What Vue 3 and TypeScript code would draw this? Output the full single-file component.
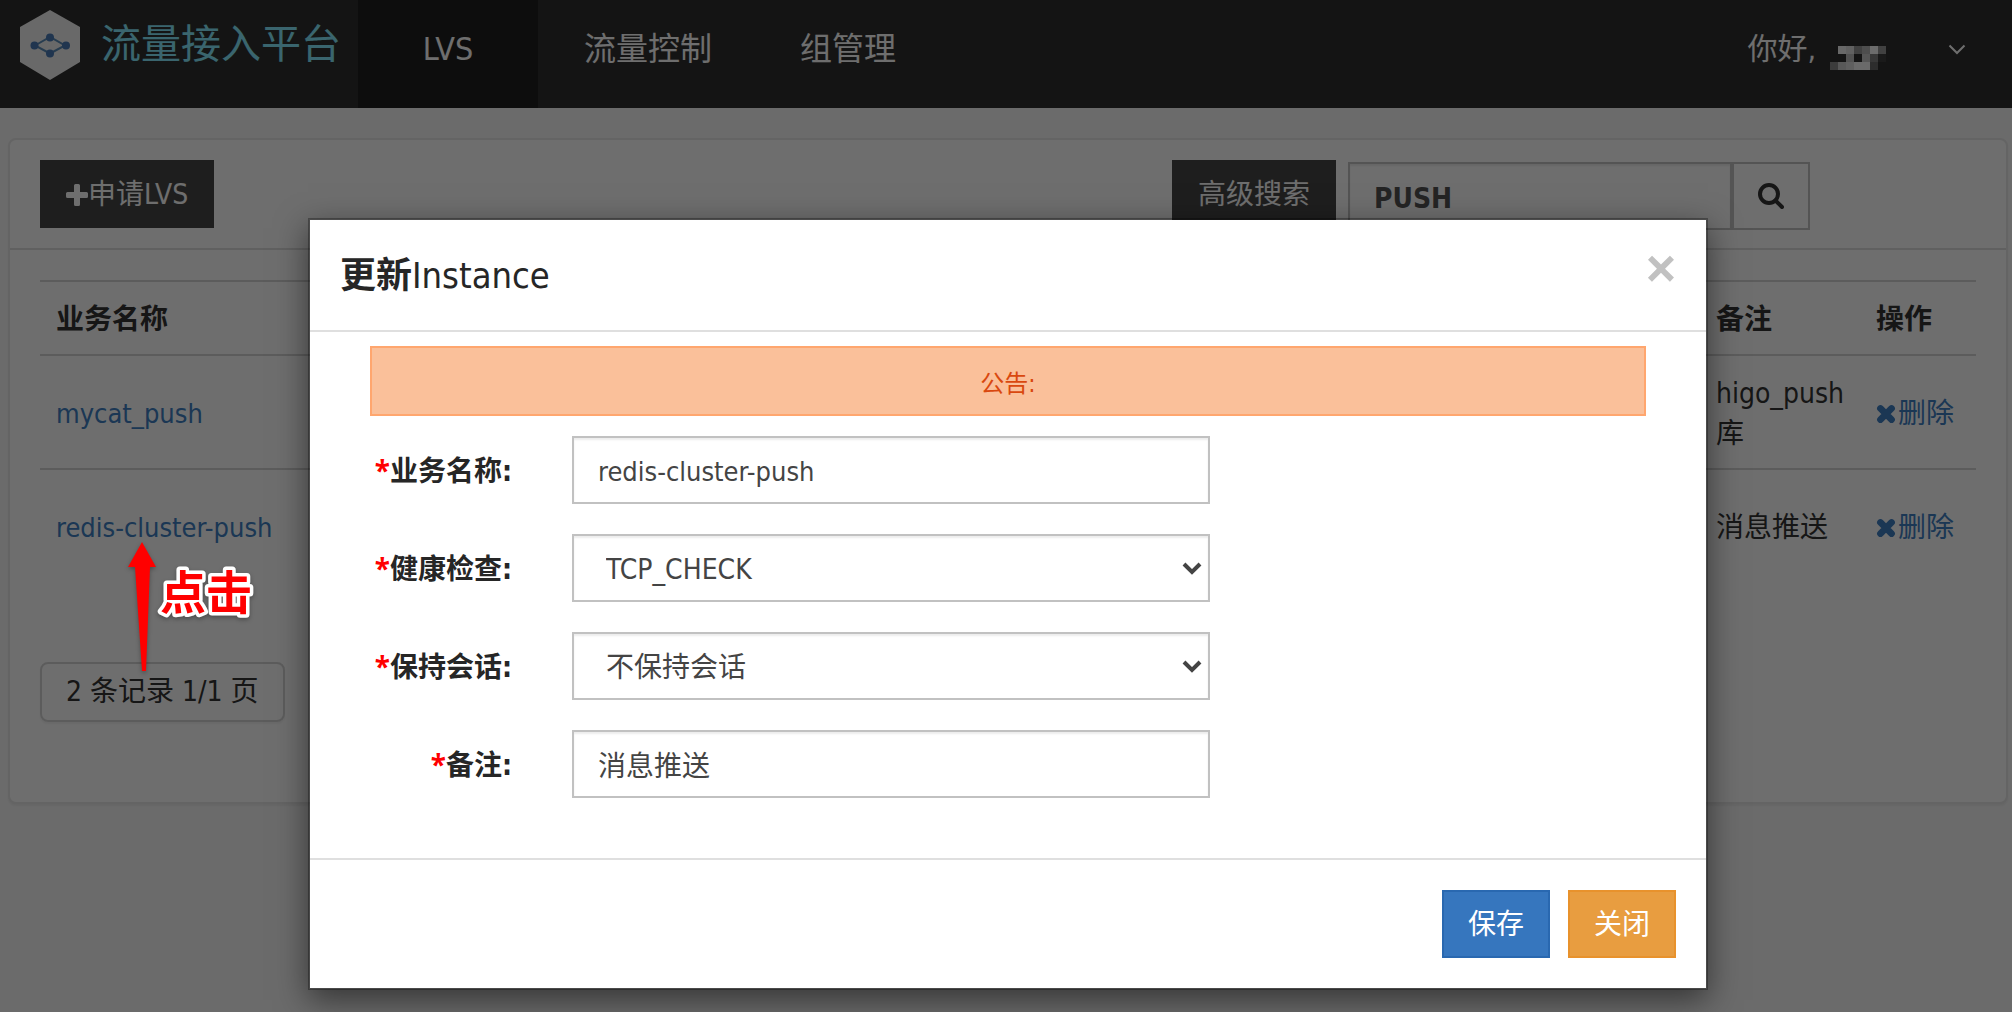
<script setup lang="ts">
import { ref } from 'vue'

interface Instance {
  name: string
  remark: string
}

const navItems: string[] = ['LVS', '流量控制', '组管理']
const activeNav = ref('LVS')
const keyword = ref('PUSH')
const instances = ref<Instance[]>([
  { name: 'mycat_push', remark: 'higo_push库' },
  { name: 'redis-cluster-push', remark: '消息推送' },
])
const form = ref({
  name: 'redis-cluster-push',
  check: 'TCP_CHECK',
  session: '不保持会话',
  remark: '消息推送',
})

/* Grey levels of the masked user name, row by row; 0 is empty. */
const mask: number[][] = [
  [0, 240, 225, 150, 180, 250, 150],
  [0, 0, 190, 0, 200, 130, 60],
  [140, 205, 220, 245, 245, 105, 0],
]
</script>

<template>
  <div class="page">
    <header class="navbar">
      <a class="brand" href="#">
        <svg class="logo" viewBox="0 0 60 70" aria-hidden="true">
          <path d="M30 0 60 17V52L30 70 0 52V17Z" fill="#f4f4f4" />
          <path d="M15 35.500 30 27 45 35.500 30 43.500Z" fill="none" stroke="#5b8cb8" stroke-width="2" />
          <g fill="#4a7bb8">
            <circle cx="30" cy="27.500" r="4" />
            <circle cx="14.500" cy="35.500" r="4" />
            <circle cx="46" cy="35.500" r="4" />
            <circle cx="30" cy="43.500" r="4" />
          </g>
        </svg>
        <span>流量接入平台</span>
      </a>
      <nav class="nav">
        <a v-for="item in navItems" :key="item" href="#" :class="{ active: item === activeNav }">{{ item }}</a>
      </nav>
      <a class="user" href="#">
        <span>你好,</span>
        <svg class="mask" viewBox="0 0 56 24" aria-hidden="true">
          <template v-for="(row, y) in mask" :key="y">
            <rect
              v-for="(level, x) in row"
              :key="x"
              :x="x * 8"
              :y="y * 8"
              width="8"
              height="8"
              :fill="level ? `rgb(${level},${level},${level})` : 'none'"
            />
          </template>
        </svg>
        <svg class="caret" viewBox="0 0 18 12" aria-hidden="true">
          <path d="M1.500 1.500 9 9 16.500 1.500" fill="none" stroke="#fff" stroke-width="2" />
        </svg>
      </a>
    </header>

    <main class="panel">
      <div class="toolbar">
        <button type="button" class="btn dark">
          <svg class="plus" viewBox="0 0 22 22" aria-hidden="true">
            <path d="M9.500 0h3a1.500 1.500 0 0 1 1.500 1.500V8h6.500A1.500 1.500 0 0 1 22 9.500v3a1.500 1.500 0 0 1-1.500 1.500H14v6.500a1.500 1.500 0 0 1-1.500 1.500h-3A1.500 1.500 0 0 1 8 20.500V14H1.500A1.500 1.500 0 0 1 0 12.500v-3A1.500 1.500 0 0 1 1.500 8H8V1.500A1.500 1.500 0 0 1 9.500 0Z" fill="currentColor" />
          </svg>
          申请LVS
        </button>
        <form class="search" @submit.prevent>
          <button type="button" class="btn dark">高级搜索</button>
          <input v-model="keyword" type="text" aria-label="搜索" />
          <button type="submit" class="go" aria-label="搜索">
            <svg viewBox="0 0 26 26" aria-hidden="true">
              <circle cx="11" cy="11" r="9" fill="none" stroke="currentColor" stroke-width="4" />
              <path d="M17.500 17.500 24 24" stroke="currentColor" stroke-width="4" stroke-linecap="round" />
            </svg>
          </button>
        </form>
      </div>

      <div class="content">
        <table>
          <colgroup>
            <col />
            <col class="col-remark" />
            <col class="col-action" />
          </colgroup>
          <thead>
            <tr>
              <th scope="col">业务名称</th>
              <th scope="col">备注</th>
              <th scope="col">操作</th>
            </tr>
          </thead>
          <tbody>
            <tr v-for="row in instances" :key="row.name">
              <td><a href="#" class="name">{{ row.name }}</a></td>
              <td>{{ row.remark }}</td>
              <td>
                <a href="#" class="remove">
                  <svg viewBox="0 0 18 18" aria-hidden="true">
                    <path d="M4 4 14 14M14 4 4 14" stroke="currentColor" stroke-width="6" stroke-linecap="round" />
                  </svg>
                  删除
                </a>
              </td>
            </tr>
          </tbody>
        </table>
        <div class="pager">2 条记录 1/1 页</div>
      </div>
    </main>

    <div class="backdrop">
      <section class="modal" role="dialog" aria-labelledby="modal-title">
        <header class="modal-header">
          <h4 id="modal-title"><b>更新</b>Instance</h4>
          <button type="button" class="close" aria-label="关闭">×</button>
        </header>
        <form class="modal-body" @submit.prevent>
          <div class="notice">公告:</div>
          <div class="field">
            <label for="f-name"><i>*</i>业务名称:</label>
            <input id="f-name" v-model="form.name" type="text" class="name" />
          </div>
          <div class="field">
            <label for="f-check"><i>*</i>健康检查:</label>
            <div class="select">
              <select id="f-check" v-model="form.check">
                <option>TCP_CHECK</option>
              </select>
              <svg viewBox="0 0 20 14" aria-hidden="true">
                <path d="M2 2 10 10 18 2" fill="none" stroke="currentColor" stroke-width="4" />
              </svg>
            </div>
          </div>
          <div class="field">
            <label for="f-session"><i>*</i>保持会话:</label>
            <div class="select">
              <select id="f-session" v-model="form.session">
                <option>不保持会话</option>
              </select>
              <svg viewBox="0 0 20 14" aria-hidden="true">
                <path d="M2 2 10 10 18 2" fill="none" stroke="currentColor" stroke-width="4" />
              </svg>
            </div>
          </div>
          <div class="field">
            <label for="f-remark"><i>*</i>备注:</label>
            <input id="f-remark" v-model="form.remark" type="text" />
          </div>
        </form>
        <footer class="modal-footer">
          <button type="button" class="btn save">保存</button>
          <button type="button" class="btn cancel">关闭</button>
        </footer>
      </section>
    </div>

    <svg class="hint" viewBox="0 0 140 140" aria-hidden="true">
      <path d="M22 2 36 27H30L26 131H22L15 27H8Z" fill="#f00" />
      <text x="40" y="69">点击</text>
    </svg>
  </div>
</template>

<style>
body {
  background: #f8f8f8;
}
</style>

<style scoped>
.page {
  position: relative;
  box-sizing: border-box;
  min-height: 100vh;
  color: #333;
  font: 28px/40px "DejaVu Sans Condensed", "Noto Sans CJK SC", sans-serif;
}
.page * {
  box-sizing: border-box;
}
a {
  color: #4080c4;
  text-decoration: none;
}
button,
input,
select {
  margin: 0;
  border-radius: 0;
  font: inherit;
}

/* top bar */
.navbar {
  display: flex;
  height: 108px;
  background: #2f2f2f;
}
.brand {
  display: flex;
  align-items: flex-start;
  width: 358px;
  padding: 10px 0 0 20px;
  gap: 21px;
  color: #87ebff;
  font-size: 40px;
  line-height: 68px;
  white-space: nowrap;
}
.logo {
  width: 60px;
  height: 70px;
}
.nav {
  display: flex;
}
.nav a {
  min-width: 180px;
  padding: 24px 44px 0;
  color: #fff;
  font-size: 32px;
  line-height: 50px;
  text-align: center;
}
.nav .active {
  margin-right: 2px;
  background: #1e1e1e;
}
.user {
  display: flex;
  align-items: flex-start;
  margin-left: auto;
  padding: 24px 46px 0 0;
  color: #fff;
  font-size: 30px;
  line-height: 50px;
}
.mask {
  width: 56px;
  height: 24px;
  margin: 22px 62px 0 14px;
}
.caret {
  width: 18px;
  height: 12px;
  margin-top: 20px;
}

/* list panel */
.panel {
  margin: 30px 4px 0 8px;
  border: 2px solid #e7e7e7;
  border-radius: 8px;
  background: #fff;
  box-shadow: 0 2px 2px rgba(0, 0, 0, 0.05);
}
.toolbar {
  display: flex;
  justify-content: space-between;
  align-items: flex-start;
  height: 110px;
  padding: 20px 196px 0 30px;
  border-bottom: 2px solid #dedede;
}
.btn {
  display: flex;
  align-items: center;
  height: 68px;
  padding: 2px 24px 0;
  border: 2px solid;
  color: #fff;
  white-space: nowrap;
}
.dark {
  border-color: #464646;
  background: #464646;
}
.plus {
  width: 22px;
  height: 22px;
}
.search {
  display: flex;
}
.search input {
  width: 384px;
  height: 68px;
  margin: 2px 0 0 12px;
  padding: 4px 24px 0;
  border: 2px solid #c2c2c2;
  background: #fff;
  box-shadow: inset 0 2px 2px rgba(0, 0, 0, 0.075);
  color: #555;
  font-weight: bold;
}
.go {
  display: flex;
  align-items: center;
  justify-content: center;
  width: 78px;
  height: 68px;
  margin-top: 2px;
  padding: 0;
  border: 2px solid #c2c2c2;
  background: #fff;
  color: #333;
}
.go svg {
  width: 26px;
  height: 26px;
}
.content {
  padding: 30px 30px 80px;
}
table {
  width: 100%;
  border-collapse: separate;
  border-spacing: 0;
  table-layout: fixed;
}
.col-remark {
  width: 160px;
}
.col-action {
  width: 116px;
}
th,
td {
  padding: 18px 16px 14px;
  border-top: 2px solid #d6d6d6;
  text-align: left;
  vertical-align: middle;
}
th {
  height: 74px;
}
td {
  height: 114px;
}
.name {
  font-size: 27px;
}
.remove {
  display: flex;
  align-items: center;
  gap: 2px;
  white-space: nowrap;
}
.remove svg {
  flex: none;
  width: 20px;
  height: 20px;
}
.pager {
  display: inline-block;
  height: 60px;
  margin-top: 80px;
  padding: 8px 24px;
  border: 2px solid #d6d6d6;
  border-radius: 8px;
  box-shadow: 0 2px 2px rgba(0, 0, 0, 0.05);
  vertical-align: top;
}

/* dialog */
.backdrop {
  position: absolute;
  inset: 0;
  padding: 218px 0 22px 4px;
  background: rgba(0, 0, 0, 0.57);
}
.modal {
  width: 1400px;
  max-width: 100%;
  margin: 0 auto;
  border: 2px solid rgba(0, 0, 0, 0.3);
  background: #fff;
  background-clip: padding-box;
  box-shadow: 0 10px 30px rgba(0, 0, 0, 0.5);
}
.modal-header {
  display: flex;
  justify-content: space-between;
  align-items: flex-start;
  height: 112px;
  padding: 30px;
  border-bottom: 2px solid #dfdfdf;
}
h4 {
  margin: 0;
  color: #262626;
  font-size: 36px;
  font-weight: 500;
  line-height: 52px;
}
.close {
  padding: 0;
  border: 0;
  background: none;
  color: #c1c1c1;
  font-family: "Liberation Sans", sans-serif;
  font-size: 52px;
  font-weight: bold;
  line-height: 36px;
}
.modal-body {
  display: flex;
  flex-direction: column;
  gap: 30px;
  padding: 14px 60px 60px;
}
.notice {
  height: 70px;
  margin-bottom: -10px;
  border: 2px solid #ffa66e;
  background: #fac09a;
  color: #d9480f;
  font-size: 24px;
  line-height: 72px;
  text-align: center;
}
.field {
  display: flex;
  align-items: center;
  gap: 60px;
}
label {
  width: 142px;
  padding-top: 2px;
  color: #262626;
  font-weight: bold;
  text-align: right;
  white-space: nowrap;
}
label i {
  color: #f00;
  font-family: "Noto Sans", sans-serif;
  font-style: normal;
}
.field input,
.select {
  width: 50%;
  height: 68px;
}
.field input,
.select select {
  padding: 0 24px;
  border: 2px solid #c1c1c1;
  background: #fff;
  box-shadow: inset 0 2px 2px rgba(0, 0, 0, 0.075);
  color: #444;
}
.field .name {
  padding-top: 2px;
}
.select {
  position: relative;
}
.select select {
  width: 100%;
  height: 100%;
  padding: 4px 32px 0;
  appearance: none;
}
.select svg {
  position: absolute;
  top: 28px;
  right: 8px;
  width: 20px;
  height: 14px;
  color: #444;
  pointer-events: none;
}
.modal-footer {
  display: flex;
  justify-content: flex-end;
  gap: 18px;
  padding: 30px;
  border-top: 2px solid #dfdfdf;
}
.save {
  border-color: #2968b0;
  background: #3676be;
}
.cancel {
  border-color: #e8922c;
  background: #e89d40;
}

/* pointer note over the list */
.hint {
  position: absolute;
  top: 540px;
  left: 120px;
  width: 140px;
  height: 140px;
  filter: drop-shadow(0 2px 2px rgba(0, 0, 0, 0.3));
  pointer-events: none;
}
.hint text {
  fill: #f00;
  stroke: #fff;
  stroke-width: 7px;
  stroke-linejoin: round;
  paint-order: stroke;
  font-size: 46px;
  font-weight: bold;
}
</style>
